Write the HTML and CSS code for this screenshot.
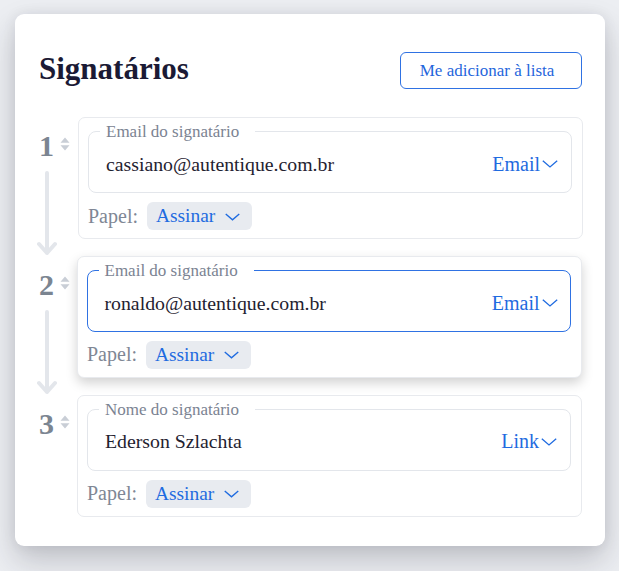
FILE: index.html
```html
<!DOCTYPE html>
<html lang="pt-BR">
<head>
<meta charset="utf-8">
<title>Signatários</title>
<link rel="stylesheet" href="styles.css">
</head>
<body>
<div class="card">
  <div class="header">
    <h1 class="title">Signatários</h1>
    <button class="add-btn" type="button">Me adicionar à lista</button>
  </div>
  <div class="rows">
    <div class="row">
      <div class="num-col">
        <div class="num-head">
          <span class="num">1</span>
          <svg class="sort" viewBox="0 0 10 14" width="10" height="14"><path d="M5 0.5 L9.5 5.8 H0.5 Z M0.5 8.2 H9.5 L5 13.5 Z"/></svg>
        </div>
        <svg class="arrow" viewBox="0 0 20 86" width="20" height="86"><path d="M10 2 V82 M2 73 L10 82 L18 73"/></svg>
      </div>
      <div class="box">
        <fieldset class="field">
          <legend class="legend">Email do signatário</legend>
          <div class="field-row">
            <span class="value">cassiano@autentique.com.br</span>
            <span class="type">Email<svg class="chev" viewBox="0 0 16 8" width="16" height="8"><path d="M0.8 0.8 L8 7 L15.2 0.8"/></svg></span>
          </div>
        </fieldset>
        <div class="role">
          <span class="role-label">Papel:</span>
          <span class="pill">Assinar<svg class="chev chev-pill" viewBox="0 0 16 8" width="15" height="8"><path d="M0.8 0.8 L8 7 L15.2 0.8"/></svg></span>
        </div>
      </div>
    </div>
    <div class="row">
      <div class="num-col">
        <div class="num-head">
          <span class="num">2</span>
          <svg class="sort" viewBox="0 0 10 14" width="10" height="14"><path d="M5 0.5 L9.5 5.8 H0.5 Z M0.5 8.2 H9.5 L5 13.5 Z"/></svg>
        </div>
        <svg class="arrow" viewBox="0 0 20 86" width="20" height="86"><path d="M10 2 V82 M2 73 L10 82 L18 73"/></svg>
      </div>
      <div class="box box-lifted">
        <fieldset class="field field-active">
          <legend class="legend">Email do signatário</legend>
          <div class="field-row">
            <span class="value">ronaldo@autentique.com.br</span>
            <span class="type">Email<svg class="chev" viewBox="0 0 16 8" width="16" height="8"><path d="M0.8 0.8 L8 7 L15.2 0.8"/></svg></span>
          </div>
        </fieldset>
        <div class="role">
          <span class="role-label">Papel:</span>
          <span class="pill">Assinar<svg class="chev chev-pill" viewBox="0 0 16 8" width="15" height="8"><path d="M0.8 0.8 L8 7 L15.2 0.8"/></svg></span>
        </div>
      </div>
    </div>
    <div class="row">
      <div class="num-col">
        <div class="num-head">
          <span class="num">3</span>
          <svg class="sort" viewBox="0 0 10 14" width="10" height="14"><path d="M5 0.5 L9.5 5.8 H0.5 Z M0.5 8.2 H9.5 L5 13.5 Z"/></svg>
        </div>
      </div>
      <div class="box box-shift">
        <fieldset class="field">
          <legend class="legend">Nome do signatário</legend>
          <div class="field-row">
            <span class="value">Ederson Szlachta</span>
            <span class="type">Link<svg class="chev" viewBox="0 0 16 8" width="16" height="8"><path d="M0.8 0.8 L8 7 L15.2 0.8"/></svg></span>
          </div>
        </fieldset>
        <div class="role">
          <span class="role-label">Papel:</span>
          <span class="pill">Assinar<svg class="chev chev-pill" viewBox="0 0 16 8" width="15" height="8"><path d="M0.8 0.8 L8 7 L15.2 0.8"/></svg></span>
        </div>
      </div>
    </div>
  </div>
</div>
</body>
</html>
```
FILE: styles.css
```css
* { box-sizing: border-box; }
html, body { margin: 0; padding: 0; }
body {
  background: #eceef2;
  font-family: "Liberation Serif", "Times New Roman", serif;
  width: 619px;
  height: 571px;
  overflow: hidden;
}
.card {
  margin: 14px 14px 0 15px;
  width: 590px;
  height: 532px;
  background: #ffffff;
  border-radius: 9px;
  padding: 38px 22px 30px 24px;
  box-shadow: 0 14px 30px rgba(30, 32, 45, 0.22), 0 0 14px rgba(30, 32, 45, 0.07);
}
.header {
  display: flex;
  align-items: center;
  justify-content: space-between;
  height: 37px;
  margin-bottom: 28px;
}
.title {
  margin: 0 0 4px 0;
  font-size: 31px;
  font-weight: 700;
  color: #1b1a35;
  line-height: 1;
}
.add-btn {
  font-family: inherit;
  font-size: 17px;
  color: #1f66dc;
  background: #ffffff;
  border: 1.5px solid #2f72e3;
  border-radius: 6px;
  width: 182px;
  height: 37px;
  margin-right: 1px;
  padding: 0 8px 0 0;
}
.rows {
  display: flex;
  flex-direction: column;
  gap: 17px;
}
.row {
  display: grid;
  grid-template-columns: 39px 1fr;
  align-items: start;
}
.num-col {
  display: flex;
  flex-direction: column;
  padding-top: 14px;
}
.num-head {
  display: flex;
  align-items: center;
  gap: 6px;
}
.num {
  font-size: 30px;
  line-height: 30px;
  font-weight: 700;
  color: #7b8591;
}
.sort {
  fill: #c9ced6;
  margin-bottom: 4px;
}
.arrow {
  margin-top: 10px;
  margin-left: -2px;
  margin-bottom: -40px;
  fill: none;
  stroke: #e3e6eb;
  stroke-width: 4;
  stroke-linecap: round;
  stroke-linejoin: round;
}
.box {
  border: 1px solid #e8eaee;
  border-radius: 7px;
  padding: 5px 10px 8px 9px;
  background: #ffffff;
}
.box-lifted {
  margin-left: -1px;
  margin-right: 1px;
  box-shadow: 0 5px 12px rgba(0, 0, 0, 0.18);
}
.box-shift {
  margin-left: -1px;
  margin-right: 1px;
}
.field {
  margin: 0;
  min-width: 0;
  border: 1px solid #e3e6eb;
  border-radius: 8px;
  padding: 0 13px 8px 17px;
}
.field-active {
  border: 1.5px solid #2f72e3;
  padding: 0 12.5px 7.5px 16.5px;
}
.legend {
  font-size: 17px;
  line-height: 17px;
  color: #7b8392;
  padding: 0 16px 0 6px;
  margin-left: -6px;
}
.field-row {
  display: flex;
  align-items: center;
  justify-content: space-between;
  height: 40px;
  margin-top: 4px;
}
.value {
  font-size: 19.8px;
  color: #1f2230;
}
.type {
  display: flex;
  align-items: center;
  gap: 2px;
  font-size: 20px;
  color: #1f6be0;
}
.chev {
  fill: none;
  stroke: #1f6be0;
  stroke-width: 1.3;
}
.role {
  display: flex;
  align-items: center;
  gap: 9px;
  margin-top: 9px;
  height: 28px;
}
.role-label {
  font-size: 20px;
  color: #7f8795;
}
.pill {
  display: flex;
  align-items: center;
  gap: 10px;
  height: 28px;
  padding: 0 12px 0 9px;
  background: #e8ebf0;
  border-radius: 6px;
  font-size: 19.4px;
  color: #1f6be0;
}
.chev-pill {
  stroke-width: 1.5;
  margin-top: 1px;
}
```
